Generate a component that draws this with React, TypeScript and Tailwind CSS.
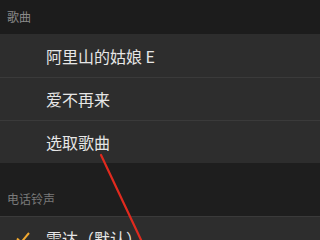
import React from 'react';

const font = { fontFamily: '"Noto Sans CJK SC", "Noto Sans", sans-serif' };

function Row({ label, check }: { label: string; check?: boolean }) {
  return (
    <div className="flex h-[43px] items-center border-t border-[#3a3a3a] bg-[#2d2d2d] first:border-t-0">
      <div className="flex w-[46px] shrink-0 items-center justify-center">
        {check && (
          <svg width="16" height="14" viewBox="0 0 16 14">
            <path d="M2 7.5 L6 11.5 L14 2" fill="none" stroke="#f0a830" strokeWidth="2" />
          </svg>
        )}
      </div>
      <span className="text-[16px] leading-none text-[#e6e6e6]">{label}</span>
    </div>
  );
}

export default function App() {
  return (
    <div className="relative h-[240px] w-[320px] overflow-hidden bg-[#1c1c1c]" style={font}>
      <div className="flex h-[34px] items-center px-[7px] text-[12px] text-[#8a8a8a]">歌曲</div>
      <div>
        <Row label="阿里山的姑娘 E" />
        <Row label="爱不再来" />
        <Row label="选取歌曲" />
      </div>
      <div className="flex h-[53px] items-end bg-[#1e1e1e] px-[7px] pb-[8px] text-[12px] text-[#7a7a7a]">电话铃声</div>
      <Row label="雷达（默认）" check />
      <svg className="absolute left-0 top-0" width="320" height="240" viewBox="0 0 320 240">
        <line x1="101" y1="155" x2="142" y2="242" stroke="#e02a1e" strokeWidth="2.2" strokeLinecap="round" />
      </svg>
    </div>
  );
}
